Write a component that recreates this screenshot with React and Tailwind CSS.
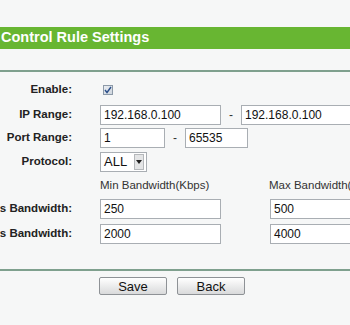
const font = { fontFamily: '"Liberation Sans", Arial, sans-serif' };

const Field = ({ value, w }) => (
  <div
    className={`${w} h-[20px] shrink-0 border border-[#a9aeb3] bg-white pl-[3px] flex items-center text-[12px] text-[#111]`}
  >
    {value}
  </div>
);

const Label = ({ children }) => (
  <div className="w-[72px] shrink-0 flex justify-end">
    <span className="whitespace-nowrap text-[11.5px] font-bold text-[#222]">{children}</span>
  </div>
);

const Row = ({ h, label, children }) => (
  <div className={`${h} flex items-center`}>
    <Label>{label}</Label>
    <div className="ml-[28px] flex items-center shrink-0">{children}</div>
  </div>
);

const Dash = () => <span className="w-[20px] shrink-0 text-center text-[12px] text-[#333]">-</span>;

const Button = ({ children }) => (
  <button className="w-[68px] h-[18px] rounded-[2px] border border-[#8e9296] bg-gradient-to-b from-white to-[#d9dadb] text-[13px] leading-none text-[#111] flex items-center justify-center">
    {children}
  </button>
);

export default function App() {
  return (
    <div className="w-[350px] h-[325px] overflow-hidden bg-[#f6f7f7]" style={font}>
      {/* title bar */}
      <div className="mt-[27px] h-[22px] bg-[#68b632] flex items-center pl-[1px]">
        <span className="whitespace-nowrap text-[14.5px] font-bold text-white">Control Rule Settings</span>
      </div>
      <div className="mt-[21px] h-[2px] bg-[#7fa08e]" />

      <div className="mt-[6px] flex flex-col">
        <Row h="h-[24px]" label="Enable:">
          <span className="ml-[3px] w-[10px] h-[10px] border border-[#8d9aa8] bg-gradient-to-br from-[#e9edf2] to-[#cfd6de] flex items-center justify-center">
            <svg width="8" height="8" viewBox="0 0 8 8">
              <path d="M1 4 L3 6.5 L7 1" fill="none" stroke="#2b4f8a" strokeWidth="1.4" />
            </svg>
          </span>
        </Row>
        <Row h="h-[25px]" label="IP Range:">
          <Field value="192.168.0.100" w="w-[121px]" />
          <Dash />
          <Field value="192.168.0.100" w="w-[121px]" />
        </Row>
        <Row h="h-[21px]" label="Port Range:">
          <Field value="1" w="w-[65px]" />
          <Dash />
          <Field value="65535" w="w-[63px]" />
        </Row>
        <Row h="h-[28px]" label="Protocol:">
          <div className="w-[47px] h-[20px] border border-[#a9aeb3] bg-white flex items-center justify-between pl-[3px] pr-[2px]">
            <span className="text-[13px] text-[#111]">ALL</span>
            <span className="w-[10px] h-[16px] border border-[#b5b8bb] bg-[#e4e5e6] flex items-center justify-center">
              <svg width="6" height="4" viewBox="0 0 6 4">
                <path d="M0 0 L6 0 L3 4 Z" fill="#222" />
              </svg>
            </span>
          </div>
        </Row>
        <div className="h-[20px] flex items-center pl-[100px] text-[11.5px] text-[#333] whitespace-nowrap">
          <span className="w-[169px] shrink-0">Min Bandwidth(Kbps)</span>
          <span className="shrink-0">Max Bandwidth(Kbps)</span>
        </div>
        <Row h="h-[26px]" label="Egress Bandwidth:">
          <Field value="250" w="w-[121px]" />
          <div className="w-[49px] shrink-0" />
          <Field value="500" w="w-[121px]" />
        </Row>
        <Row h="h-[24px]" label="Ingress Bandwidth:">
          <Field value="2000" w="w-[121px]" />
          <div className="w-[49px] shrink-0" />
          <Field value="4000" w="w-[121px]" />
        </Row>
      </div>

      <div className="mt-[23px] h-[2px] bg-[#7fa08e]" />
      <div className="mt-[6px] flex gap-[10px] pl-[99px]">
        <Button>Save</Button>
        <Button>Back</Button>
      </div>
    </div>
  );
}
